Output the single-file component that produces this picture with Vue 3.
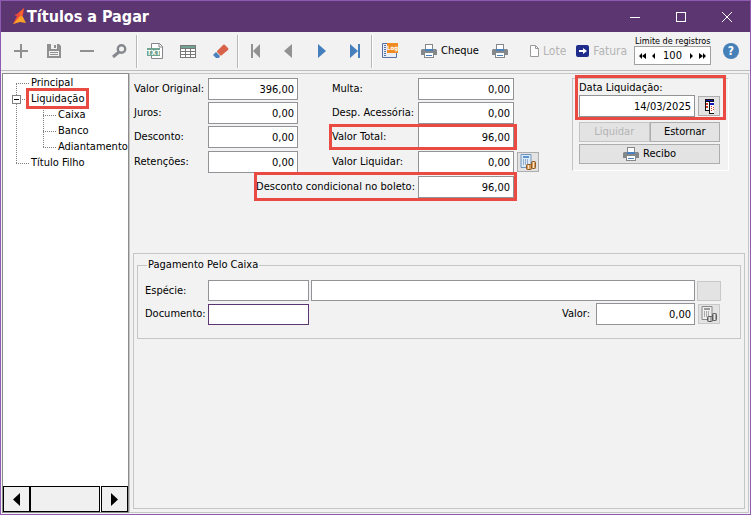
<template>
  <div class="window">
    <header class="titlebar">
      <svg class="logo" width="14" height="18" viewBox="0 0 14 18">
        <path d="M11 0 L4 6 L1 7 L4 8 L0 16 L8 13 L10 7 Z" fill="#f04b3a"/>
        <path d="M8 7 L0 16 L7 14 L13 15 L10 9 Z" fill="#f9a12b"/>
        <path d="M11 0 L6 5 L8 9 Z" fill="#f4622f"/>
      </svg>
      <h1>Títulos a Pagar</h1>
      <div class="window-controls">
        <button aria-label="Minimizar"><svg width="10" height="10"><path d="M0 5.5h10" stroke="#fff"/></svg></button>
        <button aria-label="Maximizar"><svg width="10" height="10"><rect x=".5" y=".5" width="9" height="9" fill="none" stroke="#fff"/></svg></button>
        <button aria-label="Fechar"><svg width="10" height="10"><path d="M0 0l10 10M10 0L0 10" stroke="#fff"/></svg></button>
      </div>
    </header>

    <nav class="toolbar">
      <button class="tool" aria-label="Incluir"><svg width="14" height="14"><path d="M7 0v14M0 7h14" stroke="#909090" stroke-width="2"/></svg></button>
      <button class="tool" aria-label="Salvar">
        <svg width="14" height="14"><path d="M0 0h12l2 2v12H0z" fill="#909090"/><path d="M4 0h6v5H4zM2 7h10v5H2z" fill="#f2f2f2"/><path d="M7 1h2v3H7zM3 8h8v1H3zM3 10h8v1H3z" fill="#909090"/></svg>
      </button>
      <button class="tool" aria-label="Excluir"><svg width="14" height="14"><path d="M0 7h14" stroke="#909090" stroke-width="2"/></svg></button>
      <button class="tool" aria-label="Pesquisar">
        <svg width="15" height="14"><circle cx="9.5" cy="5" r="3.7" fill="none" stroke="#85898e" stroke-width="2.4"/><path d="M7 8L1 13" stroke="#85898e" stroke-width="3"/></svg>
      </button>
      <span class="separator"></span>
      <button class="tool" aria-label="Exportar texto">
        <svg width="16" height="16"><path d="M4.5 6V.5h8l3 3v12h-11V13" fill="#fff" stroke="#85898e"/><path d="M12 0v4h4" fill="none" stroke="#85898e"/><rect y="5" width="13" height="8" fill="#71a491"/><text x="0" y="12" font-size="7" font-weight="bold" fill="#fff">TXT</text></svg>
      </button>
      <button class="tool" aria-label="Tabela">
        <svg width="16" height="13"><rect width="16" height="13" fill="#777"/><path d="M1 1h14v2H1z" fill="#71a491"/><path d="M1 4h4v2H1zM6 4h4v2H6zM11 4h4v2h-4zM1 7h4v2H1zM6 7h4v2H6zM11 7h4v2h-4zM1 10h4v2H1zM6 10h4v2H6zM11 10h4v2h-4z" fill="#fff"/></svg>
      </button>
      <button class="tool" aria-label="Limpar">
        <svg width="16" height="14"><path d="M4 7l6-6q1-1 2 0l3 3q1 1 0 2L9 11q-1 1-2 0L4 8z" fill="#d9624a"/><path d="M3 8l4 4-1 2H3L0 11z" fill="#4a82bd"/></svg>
      </button>
      <span class="separator"></span>
      <button class="tool" aria-label="Primeiro"><svg width="10" height="14"><path d="M0 0h2v14H0zM9 0v14L2 7z" fill="#929292"/></svg></button>
      <button class="tool" aria-label="Anterior"><svg width="9" height="14"><path d="M8 0v14L0 7z" fill="#929292"/></svg></button>
      <button class="tool" aria-label="Próximo"><svg width="8" height="14"><path d="M0 0v14l8-7z" fill="#4580bd"/></svg></button>
      <button class="tool" aria-label="Último"><svg width="10" height="14"><path d="M8 0h2v14H8zM0 0v14l8-7z" fill="#4580bd"/></svg></button>
      <span class="separator"></span>
      <button class="tool" aria-label="Log">
        <svg width="16" height="16"><path d="M.5 .5h14v14H.5z" fill="#e9eef8" stroke="#56709f"/><path d="M3 2v12" stroke="#56709f" stroke-width="2" stroke-dasharray="1 1"/><rect x="5" width="11" height="10" fill="#ef8b22"/><text x="5" y="7" font-size="6" font-weight="bold" fill="#fff">Log</text></svg>
      </button>
      <button class="text-tool cheque">
        <svg width="16" height="14" viewBox="0 0 16 14"><path :d="printerBody" fill="#85888b"/><path :d="printerPaper" fill="#fff"/><path :d="printerInk" fill="#4a82bd"/></svg>
        Cheque
      </button>
      <button class="text-tool" aria-label="Imprimir">
        <svg width="16" height="14" viewBox="0 0 16 14"><path :d="printerBody" fill="#85888b"/><path :d="printerPaper" fill="#fff"/><path :d="printerInk" fill="#4a82bd"/></svg>
      </button>
      <button class="text-tool lote" disabled>
        <svg width="9" height="12"><path d="M.5 .5h5l3 3v8h-8z" fill="#fff" stroke="#9a9a9a"/><path d="M5.5 .5v3h3" fill="none" stroke="#9a9a9a"/></svg>
        Lote
      </button>
      <button class="text-tool fatura" disabled>
        <svg width="13" height="12"><rect width="13" height="12" rx="2" fill="#1f2c8c"/><path d="M3 5h4V3l4 3-4 3V7H3z" fill="#fff"/></svg>
        Fatura
      </button>
      <div class="limit">
        <label for="limit">Limite de registros</label>
        <div class="spinner">
          <button aria-label="Mínimo"><svg width="7" height="6"><path d="M3 0v6L0 3zM7 0v6L3 3z"/></svg></button>
          <button aria-label="Menos"><svg width="3" height="6"><path d="M3 0v6L0 3z"/></svg></button>
          <input id="limit" v-model="limit">
          <button aria-label="Mais"><svg width="3" height="6"><path d="M0 0v6l3-3z"/></svg></button>
          <button aria-label="Máximo"><svg width="7" height="6"><path d="M0 0v6l4-3zM4 0v6l3-3z"/></svg></button>
        </div>
      </div>
      <button class="help" aria-label="Ajuda">?</button>
    </nav>

    <main class="content">
      <aside class="sidebar">
        <ul class="tree">
          <li><span>Principal</span></li>
          <li class="branch">
            <span class="marked">Liquidação</span>
            <button class="toggle" aria-label="Recolher"></button>
            <ul>
              <li v-for="item in children" :key="item"><span>{{ item }}</span></li>
            </ul>
          </li>
          <li><span>Título Filho</span></li>
        </ul>
        <div class="scrollbar">
          <button aria-label="Rolar para a esquerda"><svg width="7" height="13"><path d="M7 0v13L0 6.5z"/></svg></button>
          <span class="thumb"></span>
          <button aria-label="Rolar para a direita"><svg width="7" height="13"><path d="M0 0v13l7-6.5z"/></svg></button>
        </div>
      </aside>

      <section class="page">
        <div class="summary">
          <div class="fields">
            <template v-for="row in rows" :key="row[0].id">
              <template v-for="field in row" :key="field.id">
                <label :for="field.id" :class="field.kind">{{ field.label }}</label>
                <div class="value" :class="field.kind">
                  <input :id="field.id" v-model="field.value">
                </div>
              </template>
              <div class="extra">
                <button v-if="row[0].id === 'retencoes'" class="icon-button" aria-label="Calcular">
                  <svg width="17" height="16" viewBox="0 0 17 16"><path d="M1 .5h10v13H1z" fill="#dce9f7" stroke="#6f94c0"/><path d="M3 2h6v2H3z" fill="#5f93cb"/><path d="M3 6h6M3 8h6M3 10h6" stroke="#4d6f9e" stroke-dasharray="1 1"/><rect x="11.500" y="7.500" width="4" height="7" rx="1" fill="#d79a5c" stroke="#8a5a24"/><rect x="6.500" y="10.500" width="5" height="5" rx="1" fill="#d79a5c" stroke="#8a5a24"/><path d="M13.500 8v6M8.500 11v4" stroke="#fbe6c4"/></svg>
                </button>
              </div>
            </template>
          </div>

          <div class="settle">
            <div class="date-box">
              <label for="date">Data Liquidação:</label>
              <div class="date-row">
                <input id="date" v-model="date">
                <button class="icon-button" aria-label="Abrir calendário">
                  <svg width="9" height="15"><path d="M0 0h9v12H0z" fill="#111"/><path d="M1 1h7v1H1z" fill="#1515c0"/><path d="M1 3h3v8H1z" fill="#fff"/><path d="M1 4h2v2H1zM1 7h2v2H1z" fill="#d33a2a"/><path d="M4 3h5v12H4z" fill="#fff"/><path d="M4 3h1v12H4zM5 14h4v1H5z" fill="#111"/><path d="M5 4h4v2H5z" fill="#1515c0"/><path d="M6 7h1v1H6zM8 8h1v1H8zM6 9h1v1H6zM8 10h1v1H8zM6 11h1v1H6z" fill="#d33a2a"/></svg>
                </button>
              </div>
            </div>
            <div class="actions">
              <button disabled>Liquidar</button>
              <button>Estornar</button>
            </div>
            <button class="receipt">
              <svg width="16" height="14" viewBox="0 0 16 14"><path :d="printerBody" fill="#85888b"/><path :d="printerPaper" fill="#fff"/><path :d="printerInk" fill="#4a82bd"/></svg>
              Recibo
            </button>
          </div>
        </div>

        <div class="details">
          <fieldset>
            <legend>Pagamento Pelo Caixa</legend>
            <div class="line">
              <label for="especie">Espécie:</label>
              <input id="especie" class="short">
              <input class="long" aria-label="Descrição da espécie">
              <button class="icon-button blank" aria-label="Buscar espécie" disabled></button>
            </div>
            <div class="line">
              <label for="documento">Documento:</label>
              <input id="documento" class="short focused">
              <label for="valor" class="amount-label">Valor:</label>
              <input id="valor" v-model="amount" class="amount">
              <button class="icon-button calc" aria-label="Calcular valor" disabled>
                <svg width="17" height="16" viewBox="0 0 17 16"><path d="M1 .5h10v13H1z" fill="#eee" stroke="#888"/><path d="M3 2h6v2H3z" fill="#999"/><path d="M3 6h6M3 8h6M3 10h6" stroke="#666" stroke-dasharray="1 1"/><rect x="11.500" y="7.500" width="4" height="7" rx="1" fill="#a5a5a5" stroke="#5a5a5a"/><rect x="6.500" y="10.500" width="5" height="5" rx="1" fill="#a5a5a5" stroke="#5a5a5a"/><path d="M13.500 8v6M8.500 11v4" stroke="#e6e6e6"/></svg>
              </button>
            </div>
          </fieldset>
        </div>
      </section>
    </main>
  </div>
</template>

<script setup>
import { ref } from 'vue'

const limit = ref('100')
const date = ref('14/03/2025')
const amount = ref('0,00')

const children = ['Caixa', 'Banco', 'Adiantamento']

const rows = ref([
  [
    { id: 'original', label: 'Valor Original:', value: '396,00' },
    { id: 'multa', label: 'Multa:', value: '0,00', kind: 'second' }
  ],
  [
    { id: 'juros', label: 'Juros:', value: '0,00' },
    { id: 'despesa', label: 'Desp. Acessória:', value: '0,00', kind: 'second' }
  ],
  [
    { id: 'desconto', label: 'Desconto:', value: '0,00' },
    { id: 'total', label: 'Valor Total:', value: '96,00', kind: 'second total' }
  ],
  [
    { id: 'retencoes', label: 'Retenções:', value: '0,00' },
    { id: 'liquidar', label: 'Valor Liquidar:', value: '0,00', kind: 'second' }
  ],
  [
    { id: 'boleto', label: 'Desconto condicional no boleto:', value: '96,00', kind: 'wide' }
  ]
])

const printerBody = 'M4 0h8v5h3l1 1v5h-3v3H3v-3H0V6l1-1h3z'
const printerPaper = 'M5 1h6v4H5zM4 9h8v4H4z'
const printerInk = 'M4 5h8v2H4zM5 11h6v1H5z'
</script>

<style>
body {
  margin: 0;
}
</style>

<style scoped>
.window {
  box-sizing: border-box;
  display: flex;
  flex-direction: column;
  min-height: 100vh;
  border: 1px solid #8e5bb0;
  background: #f2f2f2;
  color: #000;
  font-family: "DejaVu Sans Condensed", "DejaVu Sans", sans-serif;
  font-size: 11px;
  line-height: 14px;
}

.window * {
  box-sizing: border-box;
}

button,
input {
  margin: 0;
  padding: 0;
  font: inherit;
  color: inherit;
}

button {
  display: flex;
  align-items: center;
  justify-content: center;
  border: 0;
  background: none;
}

svg {
  display: block;
  flex-shrink: 0;
}

.titlebar {
  display: flex;
  align-items: center;
  height: 31px;
  padding-left: 12px;
  background: #5b3671;
  color: #fff;
}

.titlebar h1 {
  flex: 1;
  margin: 0;
  font-size: 16px;
  font-weight: bold;
  line-height: 20px;
}

.window-controls {
  display: flex;
}

.window-controls button {
  width: 46px;
  height: 31px;
}

.toolbar {
  display: flex;
  align-items: center;
  height: 39px;
  padding: 0 11px 0 3px;
  border-bottom: 1px solid #bdbdbd;
}

.tool {
  width: 33px;
  height: 32px;
}

.separator {
  width: 2px;
  height: 33px;
  border-left: 1px solid #b8b8b8;
  border-right: 1px solid #fff;
}

.text-tool {
  gap: 4px;
}

.cheque {
  width: 60px;
  margin: 0 11px 0 15px;
  justify-content: flex-start;
}

.lote,
.fatura {
  color: #b4b4b4;
  font-size: 12px;
}

.lote {
  margin-left: 22px;
}

.fatura {
  margin-left: 10px;
}

.limit {
  width: 77px;
  height: 28px;
  margin-left: auto;
}

.limit label {
  display: block;
  height: 9px;
  padding-left: 1px;
  font-size: 9px;
  line-height: 9px;
  white-space: nowrap;
}

.spinner {
  display: flex;
  align-items: center;
  justify-content: space-between;
  height: 19px;
  padding: 0 4px;
  border: 1px solid #a0a0a0;
  background: #fff;
}

.spinner input {
  width: 22px;
  border: 0;
  text-align: center;
}

.help {
  width: 16px;
  height: 16px;
  margin-left: 12px;
  border-radius: 50%;
  background: #4580b8;
  color: #fff;
  font-size: 12px;
  font-weight: bold;
}

.content {
  display: flex;
  flex: 1;
  padding: 2px 1px 1px;
}

.sidebar {
  display: flex;
  flex-direction: column;
  justify-content: space-between;
  width: 127px;
  border: 1px solid #8c8c8c;
  background: #fff;
}

.tree,
.tree ul {
  margin: 0;
  padding: 0;
  list-style: none;
}

.tree {
  padding-top: 1px;
  padding-left: 13px;
}

.tree li {
  position: relative;
  padding-left: 15px;
  line-height: 16px;
  white-space: nowrap;
}

.tree ul {
  padding-left: 12px;
}

/* dotted connectors between the nodes */
.tree li::before {
  content: "";
  position: absolute;
  top: 8px;
  left: 0;
  width: 13px;
  border-top: 1px dotted #808080;
}

.tree li::after {
  content: "";
  position: absolute;
  top: 8px;
  bottom: -8px;
  left: 0;
  border-left: 1px dotted #808080;
}

.tree li:last-child::after {
  display: none;
}

.tree ul li:first-child::after {
  top: -4px;
}

.toggle {
  position: absolute;
  z-index: 1;
  top: 4px;
  left: -4px;
  width: 9px;
  height: 9px;
  border: 1px solid #808080;
  background: #fff;
}

.toggle::before {
  content: "";
  width: 5px;
  height: 1px;
  background: #000;
}

.marked,
.date-box {
  position: relative;
}

.marked::after,
.date-box::after,
.total.value::after,
.wide.value::after {
  content: "";
  position: absolute;
  z-index: 2;
  border: 3px solid #e94b43;
  pointer-events: none;
}

.marked::after {
  inset: -4px -5px;
}

.scrollbar {
  display: flex;
  height: 26px;
}

.scrollbar button,
.thumb {
  border: 1px solid #000;
  background: #f0f0f0;
}

.scrollbar button {
  width: 27px;
}

.thumb {
  flex: 1;
  margin-right: 1px;
}

.page {
  display: flex;
  flex: 1;
  flex-direction: column;
  min-width: 0;
  padding: 4px 3px 3px;
  border: 1px solid #c6c6c6;
}

.summary {
  display: flex;
  align-items: flex-start;
  min-height: 175px;
}

.fields {
  display: grid;
  grid-template-columns: 75px 90px 120px 96px 25px;
  grid-template-rows: 22px 22px 22px 24px 22px;
  row-gap: 2px;
  align-items: center;
}

.fields label {
  padding-left: 1px;
  white-space: nowrap;
}

.fields label.second {
  padding-left: 34px;
}

.fields label.wide {
  grid-column: 1 / 4;
  padding-right: 3px;
  text-align: right;
}

.value {
  position: relative;
}

.total.value::after {
  inset: -2px -3px -2px -89px;
}

.wide.value::after {
  inset: -4px -3px -3px -164px;
}

.extra {
  padding-left: 3px;
}

input {
  display: block;
  width: 100%;
  height: 22px;
  padding: 0 3px;
  border: 1px solid #919397;
  background: #fff;
  outline: 0;
  text-align: right;
}

.spinner input {
  height: 14px;
  padding: 0;
}

.icon-button {
  flex-shrink: 0;
  width: 22px;
  height: 20px;
  border: 1px solid #adadad;
  background: #e3e3e3;
}

.settle {
  width: 157px;
  margin-left: 33px;
  padding: 2px 8px 6px 6px;
  border: 1px solid #c4c4c4;
  border-right-color: #fff;
  border-bottom-color: #fff;
}

.date-box::after {
  inset: -6px -6px -3px -4px;
}

.date-box label {
  display: block;
}

.date-row {
  display: flex;
  align-items: center;
  gap: 3px;
}

.actions {
  display: flex;
  margin: 5px 0 2px;
}

.actions button,
.receipt {
  flex: 1;
  height: 20px;
  border: 1px solid #adadad;
  background: #e3e3e3;
}

.actions button:disabled {
  border-color: #c4c4c4;
  color: #b4b4b4;
}

.receipt {
  gap: 4px;
  width: 100%;
}

.details {
  flex: 1;
  padding: 4px 3px;
  border: 1px solid #c6c6c6;
}

fieldset {
  min-width: 0;
  margin: 0;
  padding: 8px 19px 13px 7px;
  border: 1px solid #c6c6c6;
}

legend {
  margin-left: 2px;
  padding: 0 1px;
}

.line {
  display: flex;
  align-items: center;
  gap: 2px;
}

.line + .line {
  margin-top: 2px;
}

.line label {
  width: 61px;
  white-space: nowrap;
}

.line .short {
  width: 101px;
  height: 21px;
}

.line .long {
  flex: 1;
  width: auto;
  height: 21px;
}

.line .focused {
  border-color: #5b3671;
}

.line .amount-label {
  width: 32px;
  margin-left: auto;
}

.line .amount {
  width: 99px;
}

.icon-button.blank {
  width: 24px;
  border-color: #c8c8c8;
}

.icon-button.calc {
  width: 22px;
  margin: 0 1px;
  border-color: #c8c8c8;
}
</style>
